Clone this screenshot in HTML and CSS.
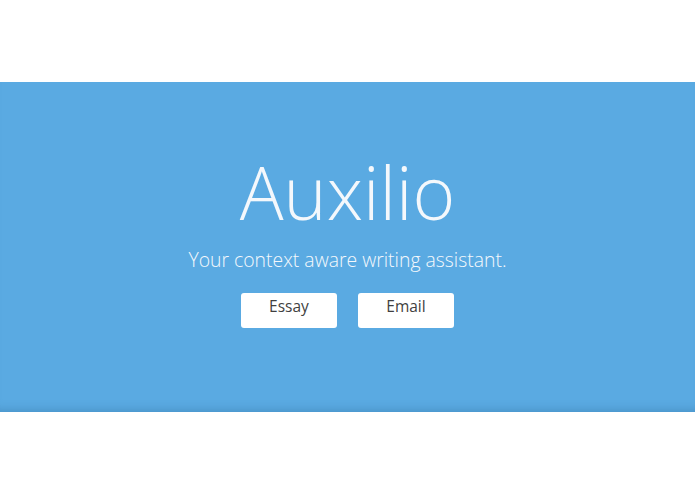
FILE: index.html
```html
<!DOCTYPE html>
<html>
<head>
<meta charset="utf-8">
<link rel="stylesheet" href="styles.css">
</head>
<body>
<div class="top"></div>
<section class="hero">
  <h1 class="title">Auxilio</h1>
  <p class="tagline">Your context aware writing assistant.</p>
  <div class="actions">
    <button class="btn">Essay</button>
    <button class="btn">Email</button>
  </div>
</section>
</body>
</html>
```
FILE: styles.css
```css
html, body {
  margin: 0;
  padding: 0;
  background: #ffffff;
  font-family: "Open Sans", "Liberation Sans", sans-serif;
}
.top {
  height: 82px;
}
.hero {
  height: 330px;
  background: #5aaae2;
  box-shadow: inset 0 -10px 10px -8px rgba(40, 100, 150, 0.35);
  display: flex;
  flex-direction: column;
  align-items: center;
  color: #f4f8fc;
}
.title {
  margin: 65px 0 0 0;
  font-weight: 300;
  font-size: 73px;
  line-height: 90px;
  letter-spacing: 0;
}
.tagline {
  margin: 9px 0 0 0;
  font-weight: 300;
  font-size: 19.4px;
  line-height: 28px;
}
.actions {
  display: flex;
  gap: 21px;
  margin-top: 19px;
}
.btn {
  width: 96px;
  height: 35px;
  border: none;
  border-radius: 3px;
  background: #ffffff;
  color: #3f3f3f;
  font-family: "Open Sans", "Liberation Sans", sans-serif;
  font-size: 15.5px;
  padding: 0 0 9px 0;
}
```
